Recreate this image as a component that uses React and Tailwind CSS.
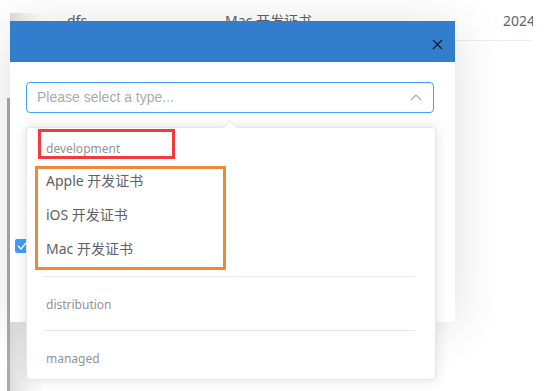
import React from 'react';

const groups = [
  { title: 'development', items: ['Apple 开发证书', 'iOS 开发证书', 'Mac 开发证书'] },
  { title: 'distribution', items: [] },
  { title: 'managed', items: [] },
];

const CloseIcon = () => (
  <svg width="11" height="11" viewBox="0 0 11 11">
    <path d="M1 1L10 10M10 1L1 10" stroke="#1a1a1a" strokeWidth="1.4" />
  </svg>
);

const ChevronUp = () => (
  <svg width="12" height="7" viewBox="0 0 12 7">
    <polyline points="1,6 6,1 11,6" fill="none" stroke="#a8abb2" strokeWidth="1.2" />
  </svg>
);

const Dropdown = () => (
  <div className="absolute left-[26px] top-[127px] w-[410px] h-[253px] bg-white border border-[#e4e7ed] rounded-[4px] shadow-[0_0_14px_rgba(0,0,0,0.12)]">
    <div className="absolute left-[198px] -top-[6px] w-[10px] h-[10px] bg-white border-l border-t border-[#e4e7ed] rotate-45" />
    <div className="pt-[5px] pb-[6px] font-['Noto_Sans','Noto_Sans_CJK_SC',sans-serif]">
      {groups.map((g, i) => (
        <div key={g.title}>
          {i > 0 && <div className="h-px bg-[#e4e7ed] ml-[17px] mr-[20px] mt-[11px] mb-[12px]" />}
          <div className="h-[30px] flex items-center pt-[2px] pl-[19px] text-[12px] text-[#909399]">{g.title}</div>
          {g.items.map((it) => (
            <div key={it} className="h-[34px] flex items-center pl-[19px] text-[14px] text-[#606266]">
              {it}
            </div>
          ))}
        </div>
      ))}
    </div>
  </div>
);

export default function App() {
  return (
    <div className="relative w-[560px] h-[391px] bg-white overflow-hidden font-['Liberation_Sans','Noto_Sans_CJK_SC',sans-serif]">
      <div className="flex h-full pt-[13px]">
        <div className="w-[10px] shrink-0">
          <div className="ml-[7px] mt-[85px] w-[3px] h-full bg-[#ababab]" />
        </div>
        <div className="flex-1 bg-[linear-gradient(to_right,#dcdcdc,#f4f4f4_18px,#ffffff_34px)]">
          <div className="w-[523px] h-[28px] overflow-hidden border-b border-[#ebeef5] flex items-start text-[14px] leading-[16px] text-[#606266] font-['Noto_Sans','Noto_Sans_CJK_SC',sans-serif]">
            <div className="w-[57px] shrink-0" />
            <div className="w-[158px] shrink-0">dfs</div>
            <div className="w-[278px] shrink-0">Mac 开发证书</div>
            <div className="shrink-0 whitespace-nowrap">2024</div>
          </div>
        </div>
      </div>

      <div className="absolute left-[10px] top-[21px] w-[445px] h-[301px] bg-white rounded-br-[3px] shadow-[0_6px_50px_rgba(0,0,0,0.13)]">
        <div className="h-[41px] bg-[#337ecc] flex justify-end items-start pt-[18px] pr-[12px]">
          <CloseIcon />
        </div>
        <div className="ml-[16px] mt-[20px] w-[408px] h-[31px] border border-[#409eff] rounded-[4px] flex items-center justify-between pl-[10px] pr-[11px]">
          <span className="text-[14px] text-[#a8abb2]">Please select a type...</span>
          <ChevronUp />
        </div>
        <div className="ml-[5px] mt-[126px] w-[14px] h-[14px] rounded-[2px] bg-[#409eff] flex items-center justify-center">
          <svg width="10" height="8" viewBox="0 0 10 8">
            <path d="M1 4L4 7L9 1" fill="none" stroke="#fff" strokeWidth="1.4" />
          </svg>
        </div>
      </div>

      <Dropdown />

      <div className="absolute left-[38px] top-[129px] w-[137px] h-[30px] border-[3px] border-[#f43b3b]" />
      <div className="absolute left-[35px] top-[166px] w-[191px] h-[104px] border-[3px] border-[#f0883a]" />
    </div>
  );
}
